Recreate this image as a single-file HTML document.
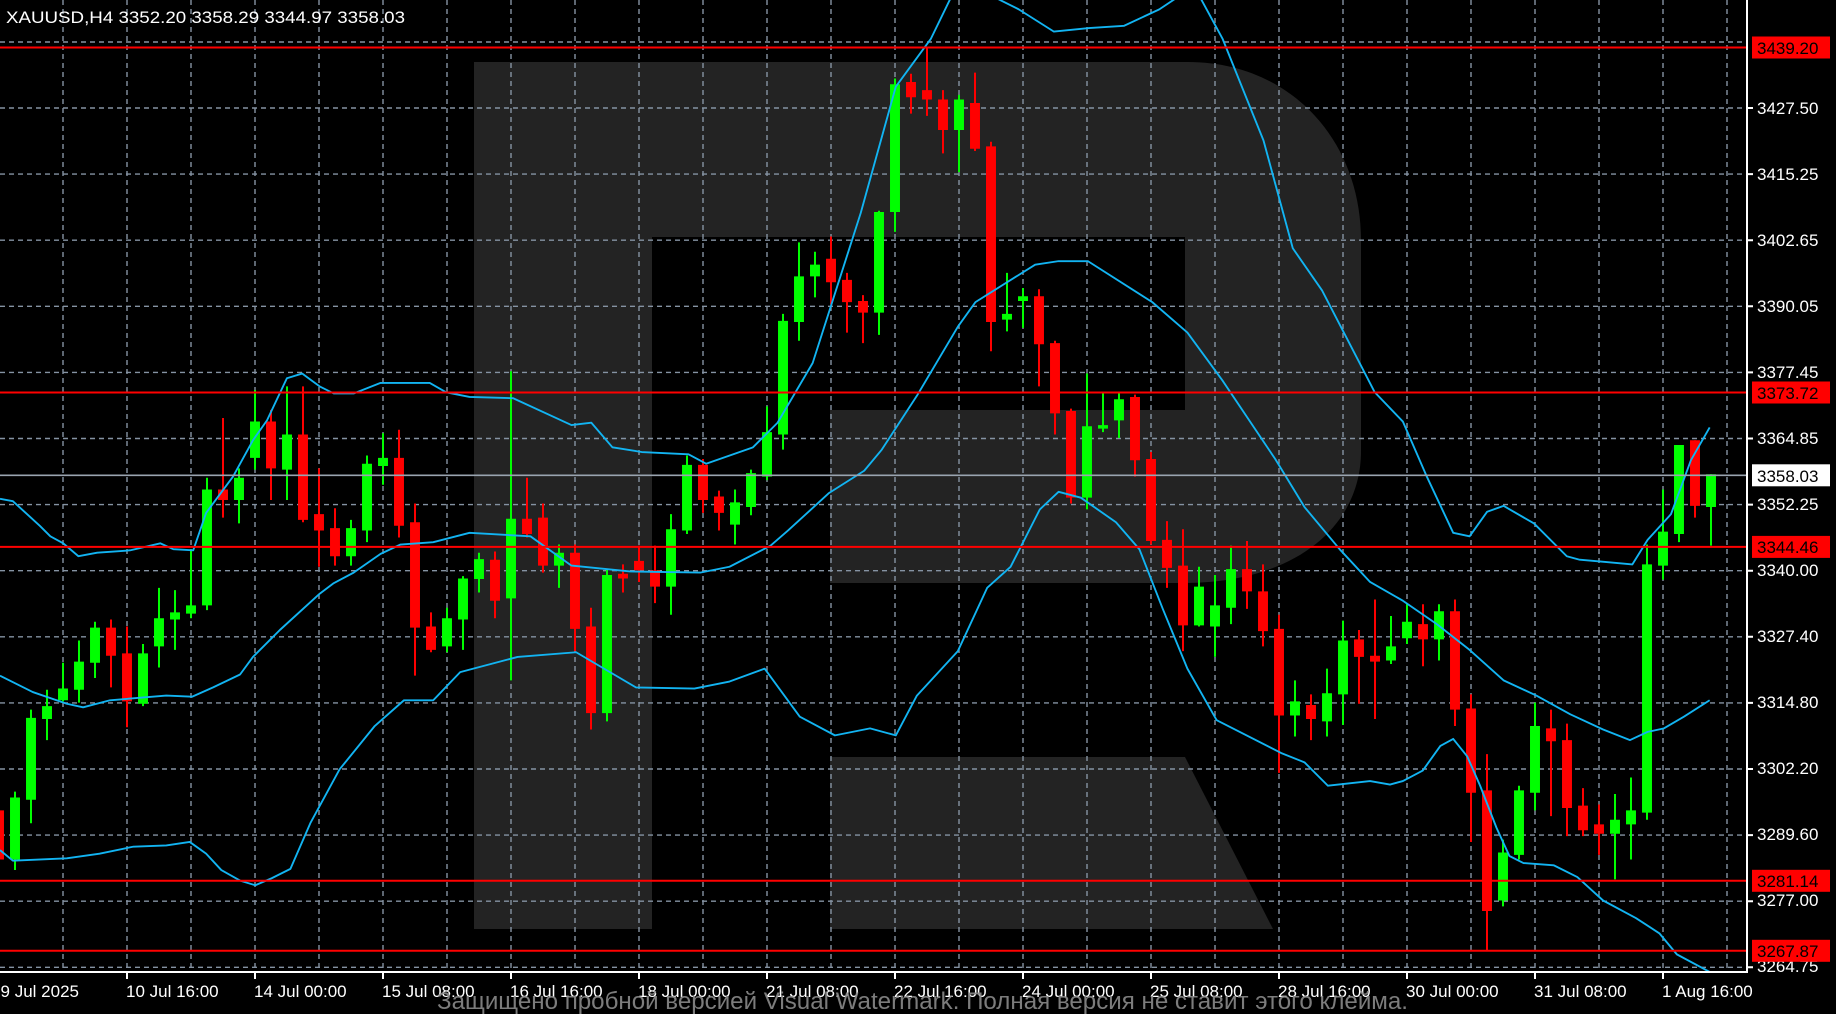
<!DOCTYPE html>
<html><head><meta charset="utf-8"><style>
html,body{margin:0;padding:0;background:#000;}
svg{display:block;}
text{font-family:"Liberation Sans",sans-serif;}
</style></head><body>
<svg width="1836" height="1014" viewBox="0 0 1836 1014" xmlns="http://www.w3.org/2000/svg">
<rect x="0" y="0" width="1836" height="1014" fill="#000"/>
<defs><clipPath id="c"><rect x="0" y="0" width="1747" height="971"/></clipPath></defs>
<g clip-path="url(#c)">
<path d="M474,62 H1188 C1290,62 1361,140 1361,240 V451 C1361,530 1290,583 1185,583 H830 V410 H1185 V237 H652 V929 H474 Z" fill="#232323"/>
<path d="M830,757 H1185 L1273,929 H830 Z" fill="#232323"/>
<g stroke="#8593a3" stroke-width="1.4" stroke-dasharray="5,4" fill="none">
<path d="M63 0V971M127 0V971M191 0V971M255 0V971M319 0V971M383 0V971M447 0V971M511 0V971M575 0V971M639 0V971M703 0V971M767 0V971M831 0V971M895 0V971M959 0V971M1023 0V971M1087 0V971M1151 0V971M1215 0V971M1279 0V971M1343 0V971M1407 0V971M1471 0V971M1535 0V971M1599 0V971M1663 0V971M1727 0V971"/>
<path d="M0 42H1747M0 108H1747M0 174.1H1747M0 240.2H1747M0 306.3H1747M0 372.4H1747M0 438.5H1747M0 504.6H1747M0 570.7H1747M0 636.8H1747M0 702.9H1747M0 769H1747M0 835.1H1747M0 901.2H1747M0 967.3H1747"/>
</g>
<g transform="scale(1.171)" fill="none">
<path stroke="#00ff00" stroke-width="1.7" d="M12.81 676V743M26.47 606V703M40.14 589V632M53.8 566V599M67.46 547V600M81.13 531V579M122.12 550V603M135.78 502V570M149.45 504V555M163.11 469V528M176.77 408V521M204.1 400V447M217.76 333V401M245.09 330V427M299.74 444V483M313.41 389V463M327.07 370V414M381.72 519V557M395.39 492V555M409.05 472V506M436.38 317V581M477.37 465V502M518.36 486V616M573.01 439V525M586.68 389V456M627.67 418V465M641.33 401V440M654.99 347V410M668.66 268V384M682.32 207V291M695.98 215V254M750.64 180V286M764.3 67V198M818.96 81V147M859.95 233V283M873.61 246V280M928.26 319V435M941.93 335V369M955.59 335V374M1023.91 484V535M1037.57 491V561M1051.23 466V533M1105.89 581V629M1133.22 571V629M1146.88 530V619M1187.87 526V567M1201.53 515V550M1228.86 516V564M1283.51 717V774M1297.18 671V734M1310.84 600V692M1379.16 678V751M1392.82 664V734M1406.49 465V700M1420.15 418V495M1433.81 380V463M1461.14 405V466"/>
<path stroke="#00ff00" stroke-width="8.5" d="M12.81 681V734M26.47 613V683M40.14 603V614M53.8 588V598M67.46 565V589M81.13 536V566M122.12 558V601M135.78 528V552M149.45 523V529M163.11 517V524M176.77 418V517M204.1 408V427M217.76 360V391M245.09 371V401M299.74 451V475M313.41 396V453M327.07 391V398M381.72 528V552M395.39 494V529M409.05 477.5V494.4M436.38 443V511M477.37 472V483M518.36 491V609M573.01 452V501M586.68 397V453M627.67 429V448M641.33 404V433M654.99 369V407M668.66 274V371M682.32 236V275M695.98 226V236M750.64 181V267M764.3 72V181M818.96 85V111M859.95 268V273M873.61 253V257M928.26 364V425M941.93 363V366M955.59 341V359M1023.91 501V534M1037.57 517V535M1051.23 486V519M1105.89 599V611M1133.22 592V616M1146.88 547V593M1187.87 552V564M1201.53 531V545M1228.86 522V546M1283.51 728V769M1297.18 675V730M1310.84 620V677M1379.16 700V712M1392.82 692V704M1406.49 482V694M1420.15 454V483M1433.81 380V456M1461.14 405V433"/>
<path stroke="#ff0000" stroke-width="1.7" d="M-0.85 680V742M94.79 529V587M108.45 535V621M190.44 357V442M231.43 350V427M258.75 330V446M272.42 400V484M286.08 434V483M340.73 367V459M354.4 430V577M368.06 523V557M422.71 471V528M450.04 408V459M463.7 430V489M491.03 465V556M504.7 519V623M532.02 482V506M545.69 466V497M559.35 466V515M600.34 392V438M614 419V453M709.65 202V260M723.31 233V284M736.97 252V293M777.96 63V97M791.63 40V99M805.29 77V131M832.62 62V129M846.28 121V300M887.27 247V330M900.94 291V371M914.6 349V430M969.25 337V407M982.92 386V465M996.58 445V502M1010.24 452V556M1064.9 462V520M1078.56 482V552M1092.23 525V660M1119.55 593V632M1160.54 538V601M1174.21 512V614M1215.2 516V569M1242.52 512V620M1256.19 593V719M1269.85 644V812M1324.51 606V697M1338.17 618V714M1351.83 673V714M1365.5 687V730M1447.48 376V442"/>
<path stroke="#ff0000" stroke-width="8.5" d="M-0.85 692V734M94.79 536V560M108.45 558V599M190.44 418V427M231.43 360V400M258.75 371V444M272.42 439V453M286.08 451V475M340.73 391V449M354.4 446V536M368.06 535V555M422.71 478V513M450.04 443V456M463.7 442V483M491.03 472V537M504.7 535V609M532.02 490V494M545.69 479V487M559.35 487V501M600.34 397V427M614 424V438M709.65 221V241M723.31 239V258M736.97 257V267M777.96 70V83M791.63 77V85M805.29 85V111M832.62 88V127M846.28 125V275M887.27 253V294M900.94 293V353M914.6 351V425M969.25 339V393M982.92 392V462M996.58 461V485M1010.24 483V534M1064.9 486V505M1078.56 505V539M1092.23 537V611M1119.55 602V614M1160.54 546V561M1174.21 560V565M1215.2 533V546M1242.52 522V606M1256.19 605V677M1269.85 675V778M1324.51 622V633M1338.17 632V690M1351.83 688V709M1365.5 704V712M1447.48 376V432"/>
<g stroke="#12b4f2" stroke-width="1.6" stroke-linejoin="round">
<polyline points="0,426 11,428 34,449 43,458 54,464 67,475 83,472 111,470 137,464 148,469 165,470 176,438 199,407 216,376 228,359 245,323 258,319 273,330 285,336 302,336 325,327 367,327 381,335 401,339 438,340 488,363 505,361 523,382 548,386 588,388 603,396 643,382 664,361 694,310 735,182 765,74 795,33 812,-2"/>
<polyline points="850,-2 870,8 900,27 930,24 960,22 990,8 1005,-2"/>
<polyline points="1025,-2 1044,33 1079,120 1104,212 1129,248 1174,335 1198,360 1218,406 1241,455 1255,458 1270,437 1284,432 1310,447 1338,475 1349,478 1372,480 1394,482 1407,461 1427,439 1444,393 1460,365"/>
<polyline points="0,577 28,591 57,601 71,604 94,598 142,594 164,595 182,587 205,576 216,561 239,538 273,507 285,498 302,489 325,473 342,465 370,463 401,455 453,458 488,483 538,488 598,489 623,484 658,466 673,453 708,421 738,402 753,384 783,338 818,279 833,258 884,226 904,223 929,223 984,258 1014,284 1044,325 1089,392 1114,433 1144,469 1170,497 1198,513 1227,533 1255,555 1284,581 1312,594 1341,610 1369,623 1392,632 1407,625 1421,622 1438,612 1460,598"/>
<polyline points="0,726 11,735 57,733 85,729 114,723 142,722 162,719 176,729 189,743 205,752 218,756 232,750 248,742 265,703 290,657 320,620 345,598 370,598 393,574 442,561 492,557 543,587 593,588 623,582 653,571 683,612 713,628 743,622 765,628 783,594 818,556 843,502 863,484 888,435 904,420 923,425 953,446 973,469 993,520 1014,571 1039,615 1094,643 1114,651 1134,671 1170,667 1187,670 1198,667 1215,658 1230,637 1241,631 1253,646 1264,671 1278,707 1289,731 1301,737 1327,739 1347,749 1369,769 1397,784 1417,797 1432,815 1460,830"/>
</g>
</g>
<path d="M0 475.3H1747" stroke="#9aa4b0" stroke-width="1.6"/>
<path d="M0 47.5H1747M0 392.5H1747M0 546.9H1747M0 880.8H1747M0 950.8H1747" stroke="#ff0000" stroke-width="2"/>
</g>
<path d="M1747 0V972M0 972H1748" stroke="#fff" stroke-width="2"/>
<g stroke="#fff" stroke-width="2">
<path d="M1747 108h6M1747 174.1h6M1747 240.2h6M1747 306.3h6M1747 372.4h6M1747 438.5h6M1747 504.6h6M1747 570.7h6M1747 636.8h6M1747 702.9h6M1747 769h6M1747 835.1h6M1747 901.2h6M1747 967.3h6"/>
<path d="M127 972v7M255 972v7M383 972v7M511 972v7M639 972v7M767 972v7M895 972v7M1023 972v7M1151 972v7M1279 972v7M1407 972v7M1535 972v7M1663 972v7"/>
</g>
<g fill="#fff" font-size="17">
<text x="1757" y="114">3427.50</text>
<text x="1757" y="180">3415.25</text>
<text x="1757" y="246">3402.65</text>
<text x="1757" y="312">3390.05</text>
<text x="1757" y="378">3377.45</text>
<text x="1757" y="444">3364.85</text>
<text x="1757" y="510">3352.25</text>
<text x="1757" y="576">3340.00</text>
<text x="1757" y="642">3327.40</text>
<text x="1757" y="708">3314.80</text>
<text x="1757" y="774">3302.20</text>
<text x="1757" y="840">3289.60</text>
<text x="1757" y="906">3277.00</text>
<text x="1757" y="972">3264.75</text>
</g>
<g font-size="17">
<rect x="1752" y="36.5" width="78" height="22" fill="#ff0000"/><text x="1757" y="54">3439.20</text>
<rect x="1752" y="381.5" width="78" height="22" fill="#ff0000"/><text x="1757" y="399">3373.72</text>
<rect x="1752" y="464.3" width="78" height="22" fill="#fff"/><text x="1757" y="482">3358.03</text>
<rect x="1752" y="535.9" width="78" height="22" fill="#ff0000"/><text x="1757" y="553">3344.46</text>
<rect x="1752" y="869.8" width="78" height="22" fill="#ff0000"/><text x="1757" y="887">3281.14</text>
<rect x="1752" y="939.8" width="78" height="22" fill="#ff0000"/><text x="1757" y="957">3267.87</text>
</g>
<text x="6" y="23" fill="#fff" font-size="17" textLength="399" lengthAdjust="spacingAndGlyphs">XAUUSD,H4  3352.20 3358.29 3344.97 3358.03</text>
<g fill="#fff" font-size="17">
<text x="79" y="997" text-anchor="end">9 Jul 2025</text>
<text x="126" y="997">10 Jul 16:00</text>
<text x="254" y="997">14 Jul 00:00</text>
<text x="382" y="997">15 Jul 08:00</text>
<text x="510" y="997">16 Jul 16:00</text>
<text x="638" y="997">18 Jul 00:00</text>
<text x="766" y="997">21 Jul 08:00</text>
<text x="894" y="997">22 Jul 16:00</text>
<text x="1022" y="997">24 Jul 00:00</text>
<text x="1150" y="997">25 Jul 08:00</text>
<text x="1278" y="997">28 Jul 16:00</text>
<text x="1406" y="997">30 Jul 00:00</text>
<text x="1534" y="997">31 Jul 08:00</text>
<text x="1662" y="997">1 Aug 16:00</text>
</g>
<text x="437" y="1009" fill="#8a8a8a" fill-opacity="0.9" font-size="24" textLength="971" lengthAdjust="spacingAndGlyphs">Защищено пробной версией Visual Watermark. Полная версия не ставит этого клейма.</text>
</svg>
</body></html>
